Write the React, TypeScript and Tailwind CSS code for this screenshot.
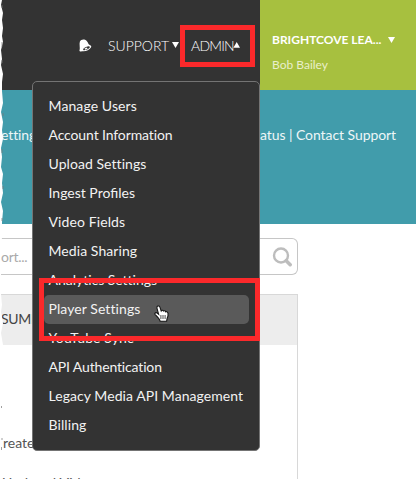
const menuItems: { label: string; tracking: string }[] = [
  { label: "Manage Users", tracking: "tracking-[0.1px]" },
  { label: "Account Information", tracking: "tracking-[-0.12px]" },
  { label: "Upload Settings", tracking: "tracking-[0.06px]" },
  { label: "Ingest Profiles", tracking: "tracking-[0px]" },
  { label: "Video Fields", tracking: "tracking-[0.1px]" },
  { label: "Media Sharing", tracking: "tracking-[0.07px]" },
  { label: "Analytics Settings", tracking: "tracking-[-0.02px]" },
  { label: "Player Settings", tracking: "tracking-[0.08px]" },
  { label: "YouTube Sync", tracking: "tracking-[0.12px]" },
  { label: "API Authentication", tracking: "tracking-[-0.15px]" },
  { label: "Legacy Media API Management", tracking: "tracking-[0.06px]" },
  { label: "Billing", tracking: "tracking-[0.08px]" },
];

function Bell() {
  return (
    <svg className="h-[13px] w-[13px] shrink-0" viewBox="0 0 13 13">
      <path d="M1.6 12.4 C.6 12.6 .2 11.8.6 11 C1.3 9 0 5 .9 2.5 C1.5.6 4.2 0 6 .7 C9 1.9 8.8 5.3 11.2 6.2 C12.4 6.8 12.5 7.6 11.9 8.6 C10.5 11 6.5 12.7 3.5 12.2Z" fill="#fff" />
      <ellipse cx="7.5" cy="9.3" rx="3.6" ry="1.3" transform="rotate(-24 7.5 9.3)" fill="#333" />
      <path d="M5.5 9.6 8 8.5 8.5 9.7 6.2 10.8Z" fill="#fff" />
    </svg>
  );
}

function Triangle({ up = false }: { up?: boolean }) {
  return (
    <svg className="h-[6px] w-[7px] shrink-0" viewBox="0 0 7 6">
      <path d={up ? "M3.7 0 7 5.7H.4Z" : "M0 0H7L3.5 6Z"} fill="#fff" />
    </svg>
  );
}

function HandCursor() {
  return (
    <svg className="absolute left-[153px] top-[304px] h-[19px] w-[17px]" viewBox="0 0 17 19">
      <path
        d="M4.5 2.2 C5.5 1.4 6.6 2 7 3.3 L8.2 7 C8.8 6 10 6.1 10.5 7 C11.2 6.4 12.3 6.7 12.7 7.8 C13.6 7.2 14.8 8 15 9.3 C15.4 11.5 14.7 13 14.1 14.4 L13.6 17.3 H7.2 C6.6 15 4.5 13 2.1 10.6 C1.2 9.5 2.6 8 4.2 9.1 L5.6 10.2 L4 4.3 C3.8 3.4 3.9 2.7 4.5 2.2Z"
        fill="#fff" stroke="#151515" strokeWidth="1.1"
      />
      <path d="M7.9 11v4M10 11v4M12.1 11v4" stroke="#222" strokeWidth=".8" />
    </svg>
  );
}

export default function App() {
  return (
    <div className="relative flex h-[481px] w-[416px] flex-col overflow-hidden bg-white font-['Lato',sans-serif]">
      <header className="flex h-[90px] shrink-0 bg-[#333]">
        <nav className="flex h-[90px] w-[260px] items-center pl-[79px] text-[14px] text-white">
          <Bell />
          <span className="ml-[16px] w-[60px] whitespace-nowrap font-light">SUPPORT</span>
          <span className="ml-[4px]"><Triangle /></span>
          <span className="ml-[12px] w-[43px] whitespace-nowrap font-light tracking-[-0.8px]">ADMIN</span>
          <span className="-ml-px"><Triangle up /></span>
        </nav>
        <div className="flex flex-1 flex-col bg-[#a7c03f] pl-[12px] pt-[31px]">
          <div className="flex h-[18px] items-center text-[12px] font-bold leading-[18px] text-white">
            <span className="w-[116px] whitespace-nowrap">BRIGHTCOVE LEA...</span>
            <Triangle />
          </div>
          <div className="mt-[7px] text-[12px] leading-[18px] text-[#e9efcb]">Bob Bailey</div>
        </div>
      </header>
      <section className="flex h-[134px] shrink-0 items-start justify-between bg-[#419cab] pt-[35px] text-[14px] leading-[20px] text-[#edf6f7]">
        <span className="w-[32px] whitespace-nowrap pl-px tracking-[-0.1px]">etting</span>
        <span className="w-[156px] whitespace-nowrap tracking-[-0.07px]">atus | Contact Support</span>
      </section>
      <div className="mt-[14px] flex h-[37px] w-[298px] shrink-0 items-center justify-between rounded-r-[6px] border border-l-0 border-[#c6c6c6] pr-[4px]">
        <span className="pl-px text-[14px] tracking-[-0.3px] text-[#aaa]">ort...</span>
        <svg className="h-[20px] w-[21px]" viewBox="0 0 21 20">
          <circle cx="9" cy="8.5" r="7" fill="none" stroke="#bdbdbd" strokeWidth="2.4" />
          <path d="m14.2 13.7 4 4" stroke="#bdbdbd" strokeWidth="3.5" strokeLinecap="round" />
        </svg>
      </div>
      <section className="mt-[19px] flex h-[185px] w-[298px] shrink-0 flex-col overflow-hidden border-r border-t border-[#d8d8d8] text-[14px] text-[#555]">
        <div className="flex h-[50px] shrink-0 items-center bg-[#ededed] pb-[3px] pl-px tracking-[-0.3px] text-[#444]">SUMMARY</div>
        <div className="mt-[88px] h-[20px] shrink-0 whitespace-nowrap pl-[3px] leading-[20px]">reate</div>
        <div className="mt-[20px] h-[20px] shrink-0 whitespace-nowrap pl-[2px] leading-[20px] tracking-[0.2px]">Updated Videos</div>
      </section>

      <svg className="absolute left-0 top-0 h-[481px] w-[5px]" viewBox="0 0 5 481">
        <path
          d="M0 0H2L1 5 3 13 2 20 3 28 2 36 3 42 1 50 2 59 1 65 3 74 2 82 2 91 3 103 1 112 3 122 2 130 3 139 1 148 2 157 1 167 3 174 2 183 3 193 1 202 3 211 2 222 2 237 1 250 1 270 1 294 2 305 1 312 3 323 1 333 3 345 1 360V481H0Z"
          fill="#fff"
        />
        <path d="M2 5v3M2 42v5M2 60v3M3 113v3M2 149v4M3 186v3M2 218v3M1.5 406v2M2 438v2M1.5 447v3" stroke="#777" strokeWidth=".7" />
      </svg>

      <div className="absolute left-[32px] top-[81px] flex h-[370px] w-[228px] flex-col rounded-[5px] border border-[#747474] bg-[#333] py-[10px] pl-[11px] pr-[10px] text-[14px] leading-[27px] text-[#f2f2f2]">
        {menuItems.map(({ label, tracking }) => (
          <div key={label} className={`h-[29px] shrink-0 whitespace-nowrap rounded-[5px] pl-[4.5px] ${tracking} ${label === "Player Settings" ? "bg-[#5a5a5a]" : ""}`}>
            {label}
          </div>
        ))}
      </div>
      <HandCursor />
      <div className="absolute left-[180px] top-[25px] h-[42px] w-[75px] border-[5px] border-[#fb292b]" />
      <div className="absolute left-[39px] top-[278px] h-[63px] w-[221px] border-[5px] border-[#fb292b]" />
    </div>
  );
}
